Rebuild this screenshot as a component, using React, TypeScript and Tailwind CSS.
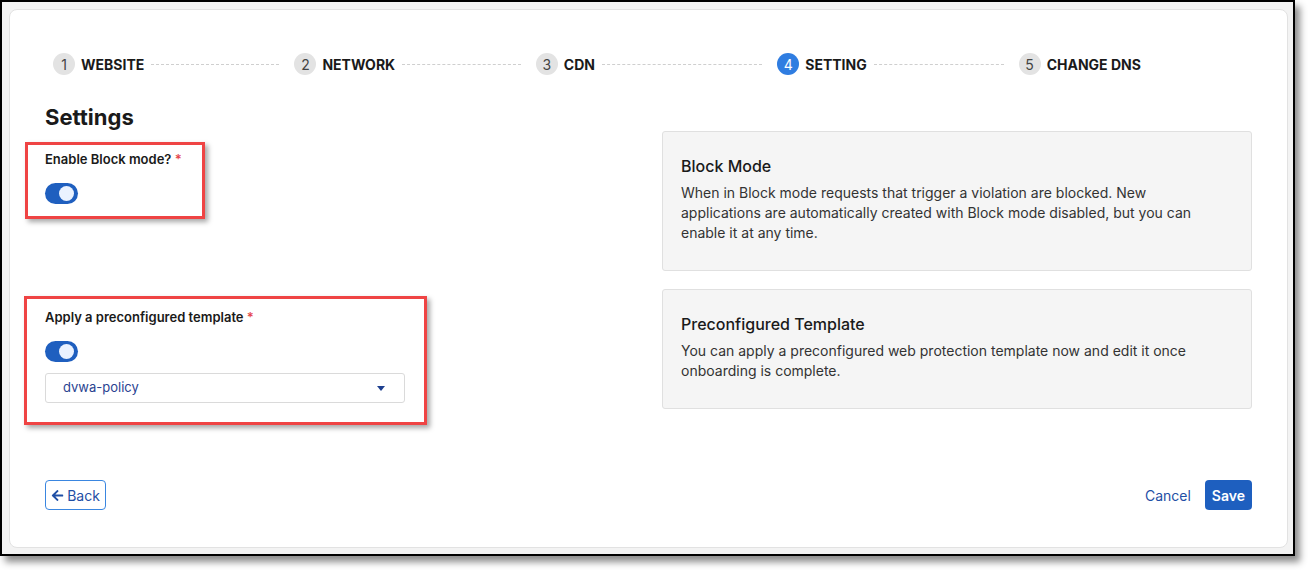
import { FaArrowLeft } from 'react-icons/fa'

const steps = [
  { n: 1, label: 'WEBSITE' },
  { n: 2, label: 'NETWORK' },
  { n: 3, label: 'CDN' },
  { n: 4, label: 'SETTING', active: true },
  { n: 5, label: 'CHANGE DNS' },
]

function Toggle() {
  return (
    <div className="flex h-[21px] w-[33px] items-center justify-end rounded-full bg-[#1f5fbf] pr-[4px]">
      <div className="h-[15px] w-[15px] rounded-full bg-[#eaf2ff]" />
    </div>
  )
}

function Label({ text }: { text: string }) {
  return (
    <div className="text-[13px] font-semibold leading-[18px] text-[#1a1a1a]">
      {text} <span className="text-[#e5484d]">*</span>
    </div>
  )
}

export default function App() {
  return (
    <div className="h-[570px] w-[1310px] bg-white font-['Inter',sans-serif]">
      <div className="h-[556px] w-[1295px] border-2 border-black bg-[#f3f3f3] pb-[6px] pl-[7px] pr-[5px] pt-[7px] shadow-[5px_6px_7px_rgba(0,0,0,0.45)]">
        <div className="flex h-full flex-col rounded-[8px] border border-[#e2e2e2] bg-white px-[35px] pt-[43px]">
          {/* stepper */}
          <div className="flex h-[22px]">
            {steps.map((s, i) => (
              <div key={s.n} className="flex flex-1 items-center">
                <div
                  className={`ml-[8px] flex h-[22px] w-[22px] items-center justify-center rounded-full text-[14px] ${
                    s.active ? 'bg-[#2f7de1] text-white' : 'bg-[#e3e3e3] text-[#444]'
                  }`}
                >
                  {s.n}
                </div>
                <span className="ml-[6px] text-[14px] font-bold text-[#1a1a1a]">{s.label}</span>
                {i < steps.length - 1 && (
                  <div className="mx-[7px] flex-1 border-t border-dashed border-[#cfcfcf]" />
                )}
              </div>
            ))}
          </div>

          <h1 className="mt-[29px] text-[22px] font-bold leading-[26px] text-[#1a1a1a]">Settings</h1>

          <div className="mt-[1px] grid grid-cols-2 gap-x-[27px] gap-y-[18px]">
            {/* row 1 */}
            <div>
              <div className="-ml-[20px] mt-[11px] w-[180px] border-[3px] border-[#ef4444] bg-white pb-[12px] pl-[17px] pt-[5px] shadow-[3px_3px_5px_rgba(0,0,0,0.35)]">
                <Label text="Enable Block mode?" />
                <div className="mt-[15px]">
                  <Toggle />
                </div>
              </div>
            </div>
            <div className="h-[140px] rounded-[3px] border border-[#e0e0e0] bg-[#f5f5f5] px-[18px] pt-[22px]">
              <div className="text-[16px] font-medium leading-[24px] text-[#1a1a1a]">Block Mode</div>
              <p className="mt-[5px] max-w-[545px] text-[14px] leading-[20px] text-[#333]">
                When in Block mode requests that trigger a violation are blocked. New applications are automatically
                created with Block mode disabled, but you can enable it at any time.
              </p>
            </div>

            {/* row 2 */}
            <div>
              <div className="-ml-[21px] mt-[7px] w-[403px] border-[3px] border-[#ef4444] bg-white pb-[19px] pl-[18px] pr-[19px] pt-[9px] shadow-[3px_3px_5px_rgba(0,0,0,0.35)]">
                <Label text="Apply a preconfigured template" />
                <div className="mt-[15px]">
                  <Toggle />
                </div>
                <div className="mt-[11px] flex h-[30px] items-center justify-between rounded-[3px] border border-[#dadada] pl-[17px] pr-[19px]">
                  <span className="text-[13px] text-[#2a4391]">dvwa-policy</span>
                  <span className="h-0 w-0 border-x-[4px] border-t-[5px] border-x-transparent border-t-[#1d3f8f]" />
                </div>
              </div>
            </div>
            <div className="h-[120px] rounded-[3px] border border-[#e0e0e0] bg-[#f5f5f5] px-[18px] pt-[22px]">
              <div className="text-[16px] font-medium leading-[24px] text-[#1a1a1a]">Preconfigured Template</div>
              <p className="mt-[5px] max-w-[545px] text-[14px] leading-[20px] text-[#333]">
                You can apply a preconfigured web protection template now and edit it once onboarding is complete.
              </p>
            </div>
          </div>

          {/* footer */}
          <div className="mt-[55px] flex items-center justify-between">
            <button className="flex h-[30px] w-[61px] items-center justify-center gap-[3px] rounded-[4px] border border-[#3a86e0] text-[14px] text-[#1f4fa5]">
              <FaArrowLeft className="h-[13px] w-[13px]" />
              Back
            </button>
            <div className="flex items-center gap-[14px]">
              <button className="text-[14px] text-[#1f4fa5]">Cancel</button>
              <button className="h-[30px] rounded-[4px] bg-[#1e5fbf] px-[7px] text-[14px] font-semibold text-white">
                Save
              </button>
            </div>
          </div>
        </div>
      </div>
    </div>
  )
}
